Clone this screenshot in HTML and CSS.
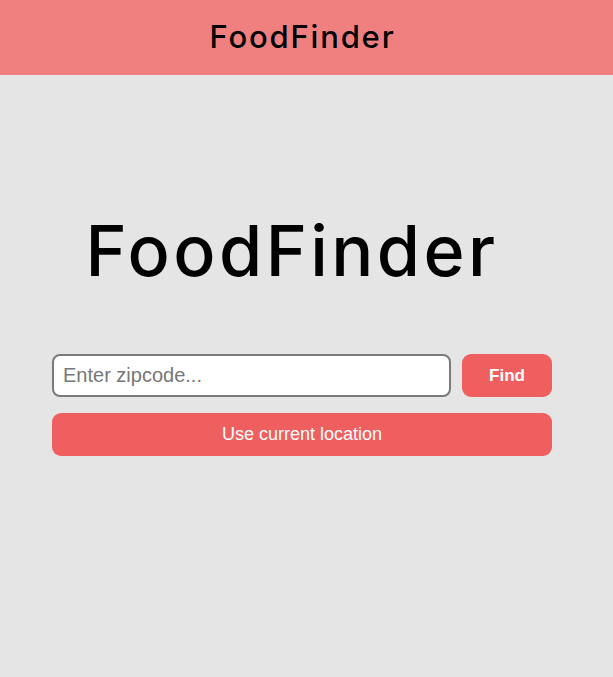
FILE: index.html
```html
<!DOCTYPE html>
<html lang="en">
<head>
<meta charset="utf-8">
<title>FoodFinder</title>
<link rel="stylesheet" href="styles.css">
</head>
<body>
<header class="topbar">
  <span class="brand">FoodFinder</span>
</header>
<main class="content">
  <h1 class="title">FoodFinder</h1>
  <form class="search" onsubmit="return false">
    <div class="row">
      <input class="zip" type="text" placeholder="Enter zipcode...">
      <button class="btn find" type="submit">Find</button>
    </div>
    <button class="btn locate" type="button">Use current location</button>
  </form>
</main>
</body>
</html>
```
FILE: styles.css
```css
* { box-sizing: border-box; }
html, body { margin: 0; padding: 0; }
body {
  background: #e5e5e5;
  font-family: "Liberation Sans", Arial, sans-serif;
  height: 677px;
  overflow: hidden;
}
.topbar {
  height: 75px;
  background: #f08080;
  display: flex;
  align-items: center;
  justify-content: center;
}
.brand {
  font-family: Inter, "DejaVu Sans", sans-serif;
  font-weight: 500;
  font-size: 31px;
  color: #000;
  letter-spacing: 1.8px;
  margin-left: -8px;
  margin-top: -2px;
}
.content {
  padding: 0 0 0 52px;
}
.title {
  font-family: Inter, "DejaVu Sans", sans-serif;
  font-weight: 500;
  font-size: 70px;
  line-height: 1;
  margin: 141px 0 0 0;
  width: 500px;
  text-align: center;
  letter-spacing: 3.4px;
  padding-right: 20px;
}
.search {
  width: 500px;
  margin-top: 68px;
  display: flex;
  flex-direction: column;
  gap: 16px;
}
.row {
  display: flex;
  gap: 11px;
}
.zip {
  flex: 1;
  height: 43px;
  border: 2px solid #7a7a7a;
  border-radius: 8px;
  background: #fff;
  font-family: "Liberation Sans", Arial, sans-serif;
  font-size: 20px;
  padding: 0 9px;
  color: #333;
}
.zip::placeholder { color: #777; }
.btn {
  border: none;
  border-radius: 9px;
  background: #ef5f5f;
  color: #fff;
  font-family: "Liberation Sans", Arial, sans-serif;
  cursor: pointer;
}
.find {
  width: 90px;
  height: 43px;
  font-size: 17px;
  font-weight: bold;
}
.locate {
  height: 43px;
  font-size: 18px;
}
```
